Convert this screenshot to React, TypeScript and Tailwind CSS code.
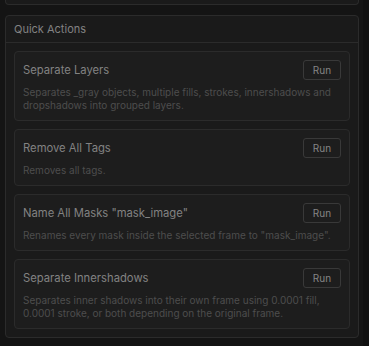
import React from 'react'

const actions = [
    {
        title: 'Separate Layers',
        desc: 'Separates _gray objects, multiple fills, strokes, innershadows and dropshadows into grouped layers.',
    },
    { title: 'Remove All Tags', desc: 'Removes all tags.' },
    {
        title: 'Name All Masks "mask_image"',
        desc: 'Renames every mask inside the selected frame to "mask_image".',
    },
    {
        title: 'Separate Innershadows',
        desc: 'Separates inner shadows into their own frame using 0.0001 fill, 0.0001 stroke, or both depending on the original frame.',
    },
]

function ActionCard({ title, desc }: { title: string; desc: string }) {
    return (
        <div className="rounded-[4px] border border-[#2b2b2b] bg-[#1d1d1d] p-2">
            <div className="flex items-center justify-between">
                <span className="text-[11.25px] text-[#828282]">{title}</span>
                <button className="h-[20px] w-[38px] rounded-[3px] border border-[#393939] text-[10px] text-[#858585]">
                    Run
                </button>
            </div>
            <p className="mt-[6px] text-[10px] leading-[13px] text-[#4d4d4d]">{desc}</p>
        </div>
    )
}

export default function App() {
    return (
        <div className="flex min-h-[346px] bg-[#141414] font-['Inter',sans-serif]">
            <div className="flex-1 pl-[5px] pr-[4px]">
                <div className="h-[5px] rounded-b-[4px] border border-t-0 border-[#2b2b2b] bg-[#1a1a1a]" />
                <section className="mt-[10px] rounded-[4px] border border-[#2b2b2b] bg-[#1a1a1a]">
                    <div className="flex h-[27px] items-center border-b border-[#2b2b2b] px-2">
                        <h2 className="text-[11px] text-[#828282]">Quick Actions</h2>
                    </div>
                    <div className="flex flex-col gap-2 p-2">
                        {actions.map((a) => (
                            <ActionCard key={a.title} title={a.title} desc={a.desc} />
                        ))}
                    </div>
                </section>
            </div>
            <div className="w-[6px] bg-[#101010]" />
        </div>
    )
}
